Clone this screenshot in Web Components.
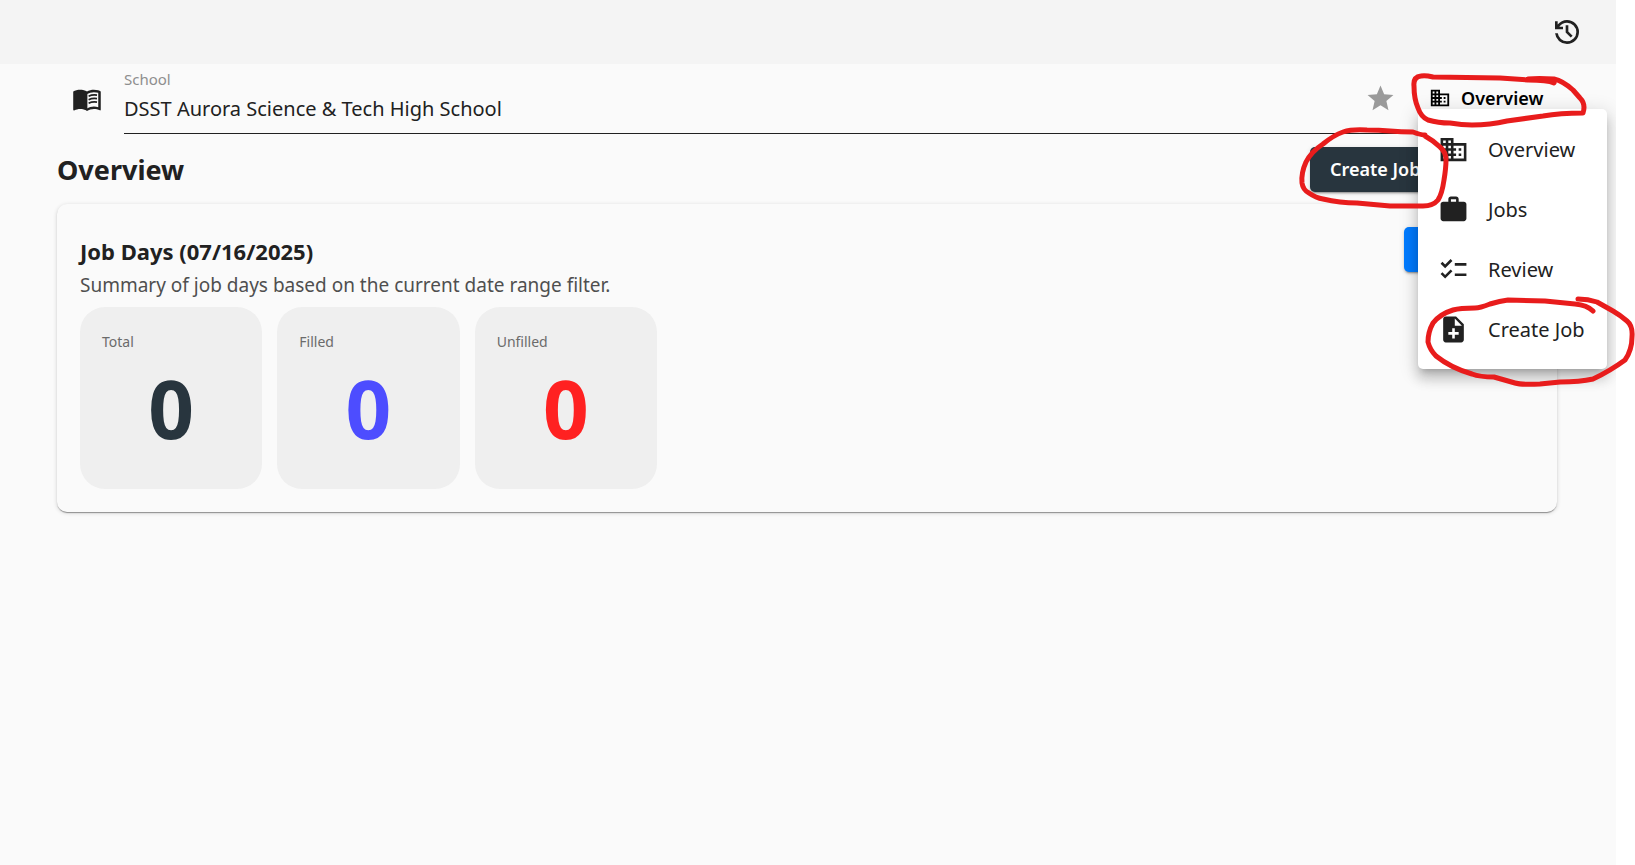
<!DOCTYPE html>
<html lang="en">
<head>
<meta charset="utf-8">
<title>Overview</title>
<style>
  html, body { margin: 0; background: #fff; }
  body { position: relative; overflow-x: hidden; font-family: "Noto Sans", "Open Sans", sans-serif; color: #212121; }
</style>
</head>
<body>
<app-shell>
  <app-toolbar slot="toolbar"></app-toolbar>
  <school-bar>
    <school-field label="School" value="DSST Aurora Science &amp; Tech High School"></school-field>
    <nav-menu label="Overview">
      <nav-item icon="domain">Overview</nav-item>
      <nav-item icon="work">Jobs</nav-item>
      <nav-item icon="checklist">Review</nav-item>
      <nav-item icon="note">Create Job</nav-item>
    </nav-menu>
  </school-bar>
  <page-heading heading="Overview">
    <app-button>Create Job</app-button>
  </page-heading>
  <summary-card heading="Job Days (07/16/2025)" text="Summary of job days based on the current date range filter.">
    <stat-tile label="Total" style="--tone:#28353e">0</stat-tile>
    <stat-tile label="Filled" style="--tone:#4d4dff">0</stat-tile>
    <stat-tile label="Unfilled" style="--tone:#ff2121">0</stat-tile>
  </summary-card>
</app-shell>
<ink-marks></ink-marks>

<script>
const ICONS = {
  book: '<path fill-rule="evenodd" d="M21 5c-1.110-.35-2.330-.5-3.500-.5-1.950 0-4.050.4-5.500 1.500-1.450-1.100-3.550-1.500-5.500-1.500S2.450 4.900 1 6v14.650c0 .25.25.5.5.5.1 0 .15-.05.25-.05C3.100 20.450 5.050 20 6.500 20c1.950 0 4.050.4 5.500 1.500 1.350-.85 3.800-1.500 5.500-1.500 1.650 0 3.350.3 4.750 1.050.1.05.15.05.25.05.25 0 .5-.25.5-.5V6c-.6-.45-1.250-.75-2-1zm0 13.500c-1.100-.35-2.300-.5-3.500-.5-1.700 0-4.150.65-5.500 1.500V8c1.350-.85 3.800-1.500 5.500-1.500 1.200 0 2.400.15 3.500.5v11.500z"/><path d="M1.500 6.300Q6.500 3.500 12.300 6.500V20.800Q7 18.500 1.500 20.500z"/><path d="M13.300 9.800q3-1.500 6.700-.9M13.300 12.600q3-1.500 6.700-.9M13.300 15.400q3-1.500 6.700-.9" fill="none" stroke="currentColor" stroke-width="1.300"/>',
  domain: '<path d="M12 7V3H2v18h20V7H12zM6 19H4v-2h2v2zm0-4H4v-2h2v2zm0-4H4V9h2v2zm0-4H4V5h2v2zm4 12H8v-2h2v2zm0-4H8v-2h2v2zm0-4H8V9h2v2zm0-4H8V5h2v2zm10 12h-8v-2h2v-2h-2v-2h2v-2h-2V9h8v10zm-2-8h-2v2h2v-2zm0 4h-2v2h2v-2z"/>',
  work: '<path d="M20 6h-4V4c0-1.110-.89-2-2-2h-4c-1.110 0-2 .89-2 2v2H4c-1.110 0-2 .89-2 2v11c0 1.110.89 2 2 2h16c1.110 0 2-.89 2-2V8c0-1.110-.89-2-2-2zm-6 0h-4V4h4v2z"/>',
  checklist: '<path d="M22 7h-9v2h9V7zm0 8h-9v2h9v-2zM5.540 11L2 7.460l1.410-1.410 2.120 2.120 4.240-4.240 1.410 1.410L5.540 11zm0 8L2 15.460l1.410-1.410 2.120 2.120 4.240-4.240 1.410 1.410L5.540 19z"/>',
  note: '<path d="M14 2H6c-1.100 0-2 .9-2 2v16c0 1.100.89 2 2 2h12c1.100 0 2-.9 2-2V8l-6-6zm2 14h-3v3h-2v-3H8v-2h3v-3h2v3h3v2zm-3-7V3.500L18.500 9H13z"/>',
  star: '<path d="M12 17.270L18.180 21l-1.640-7.030L22 9.240l-7.190-.61L12 2 9.190 8.630 2 9.240l5.460 4.730L5.820 21z"/>',
  history: '<path transform="translate(0 24) scale(.025)" d="M480-120q-138 0-240.5-91.5T122-440h82q14 104 92.5 172T480-200q117 0 198.5-81.5T760-480q0-117-81.5-198.5T480-760q-69 0-129 32t-101 88h110v80H120v-240h80v94q51-64 124.5-99T480-840q75 0 140.5 28.5t114 77q48.5 48.5 77 114T840-480q0 75-28.5 140.5t-77 114q-48.5 48.5-114 77T480-120Zm112-192L440-464v-216h80v184l128 128-56 56Z"/>'
};
const icon = (name, size) =>
  `<svg viewBox="0 0 24 24" width="${size}" height="${size}" fill="currentColor" aria-hidden="true">${ICONS[name]}</svg>`;

const define = (name, render) => customElements.define(name, class extends HTMLElement {
  connectedCallback() {
    if (this.shadowRoot) return;
    this.attachShadow({ mode: 'open' }).innerHTML =
      `<style>*{box-sizing:border-box} svg{display:block;flex:none} button,input{font:inherit;color:inherit;margin:0;border:0;background:none;padding:0}</style>` + render(this);
  }
});

define('app-shell', () => `
  <style>
    :host { display: block; margin-right: 19px; min-height: 100vh; background: #fafafa; overflow: hidden; }
    main { padding: 0 59px 24px 57px; }
  </style>
  <slot name="toolbar"></slot>
  <main><slot></slot></main>`);

define('app-toolbar', () => `
  <style>
    :host { display: flex; justify-content: flex-end; align-items: center; height: 64px; padding-right: 33px; background: #f4f4f4; }
  </style>
  <button type="button" aria-label="History">${icon('history', 32)}</button>`);

define('school-bar', () => `
  <style>
    :host { display: flex; align-items: center; }
    svg { margin: 0 22px 0 15px; }
    ::slotted(school-field) { flex: 1; }
  </style>
  ${icon('book', 30)}<slot></slot>`);

define('school-field', el => `
  <style>
    :host { display: flex; align-items: center; padding-right: 12px; border-bottom: 1px solid #212121; }
    .text { flex: 1; display: grid; gap: 7px; padding: 7px 0 9px; }
    label { font-size: 15px; line-height: 16px; color: #8e8e8e; }
    input { width: 100%; height: 30px; font-size: 20px; line-height: 30px; outline: 0; }
    button { color: #9a9a9a; }
  </style>
  <div class="text">
    <label for="f">${el.getAttribute('label')}</label>
    <input id="f" type="text" value="${el.getAttribute('value').replace('&', '&amp;')}">
  </div>
  <button type="button" aria-label="Favorite">${icon('star', 31)}</button>`);

define('nav-menu', el => `
  <style>
    :host { display: block; position: relative; width: 139px; margin-left: 10px; }
    .trigger { display: flex; align-items: center; gap: 10px; width: 100%; height: 44px; padding: 0 0 2px 11px; color: #000; font-size: 18px; font-weight: 600; }
    .menu { position: absolute; z-index: 2; top: 32px; left: 0; width: 189px; padding: 10px 0; background: #fff; border-radius: 5px;
      box-shadow: 0 6px 6px -4px rgba(0,0,0,.2), 0 10px 12px 1px rgba(0,0,0,.14), 0 4px 18px 3px rgba(0,0,0,.12); }
  </style>
  <button class="trigger" type="button" aria-haspopup="menu" aria-expanded="true">${icon('domain', 22)}<span>${el.getAttribute('label')}</span></button>
  <div class="menu" role="menu"><slot></slot></div>`);

define('nav-item', el => `
  <style>
    :host { display: block; }
    button { display: flex; align-items: center; gap: 19px; width: 100%; height: 60px; padding-left: 20px; font-size: 20px; white-space: nowrap; }
  </style>
  <button type="button" role="menuitem">${icon(el.getAttribute('icon'), 31)}<span><slot></slot></span></button>`);

define('page-heading', el => `
  <style>
    :host { display: flex; justify-content: space-between; padding: 13px 0 12px; }
    h1 { margin: 0; font-size: 27px; line-height: 45px; font-weight: 700; }
    .actions { display: flex; width: 247px; }
  </style>
  <h1>${el.getAttribute('heading')}</h1>
  <div class="actions"><slot></slot></div>`);

define('app-button', () => `
  <style>
    :host { display: block; }
    button { height: 45px; padding: 0 20px 2px; border-radius: 5px; background: #28353e; color: #fff; font-size: 18px; font-weight: 600; white-space: nowrap;
      box-shadow: 0 3px 1px -2px rgba(0,0,0,.2), 0 2px 2px rgba(0,0,0,.14), 0 1px 5px rgba(0,0,0,.12); }
  </style>
  <button type="button"><slot></slot></button>`);

define('summary-card', el => `
  <style>
    :host { display: block; padding: 23px; border-radius: 10px; background: #fafafa;
      box-shadow: 0 2px 1px -1px rgba(0,0,0,.24), 0 1px 1px rgba(0,0,0,.16), 0 1px 4px rgba(0,0,0,.16); }
    header { display: flex; justify-content: space-between; align-items: flex-start; }
    .titles { display: grid; gap: 2px; padding: 8px 0 6px; }
    h2, p { margin: 0; line-height: 32px; }
    h2 { font-size: 22px; font-weight: 700; }
    p { font-size: 19px; color: #4f4f4f; }
    button { width: 130px; height: 45px; border-radius: 5px; background: #007bff;
      box-shadow: 0 3px 1px -2px rgba(0,0,0,.2), 0 2px 2px rgba(0,0,0,.14), 0 1px 5px rgba(0,0,0,.12); }
    .tiles { display: grid; grid-template-columns: repeat(3, 1fr); gap: 15px; max-width: 577px; }
  </style>
  <header>
    <div class="titles"><h2>${el.getAttribute('heading')}</h2><p>${el.getAttribute('text')}</p></div>
    <button type="button" aria-label="Filter"></button>
  </header>
  <div class="tiles"><slot></slot></div>`);

define('stat-tile', el => `
  <style>
    :host { display: block; min-height: 182px; padding: 25px 22px 24px; border-radius: 25px; background: #efefef; box-sizing: border-box; }
    .label { font-size: 14px; line-height: 20px; color: #6b6b6b; }
    .value { margin-top: 16px; font-size: 80px; line-height: 80px; font-weight: 700; text-align: center; color: var(--tone); }
  </style>
  <div class="label">${el.getAttribute('label')}</div>
  <div class="value"><slot></slot></div>`);

/* Hand-drawn highlights, floating over the right edge of the page. */
define('ink-marks', () => `
  <style>
    :host { position: absolute; z-index: 5; top: 0; right: 0; pointer-events: none; }
  </style>
  <svg width="345" height="400" viewBox="1290 0 345 400" fill="none" stroke="#e81c1c" stroke-width="5" stroke-linecap="round" stroke-linejoin="round" aria-hidden="true">
    <path d="M1554 83C1548 80 1538 80 1528 80L1500 78L1433 77Q1425 75 1421 76Q1413 77 1414 86Q1414 99 1418 108Q1421 117 1428 120Q1438 123 1450 123Q1462 125 1472 125Q1490 125 1507 121L1543 116Q1560 113 1583 113Q1586 104 1580 98L1573 90Q1563 81 1554 79Q1538 78 1528 79"/>
    <path d="M1425 135Q1421 135 1413 132Q1401 132 1390 131Q1379 130 1367 130Q1352 129 1343 132Q1334 135 1323 144Q1311 152 1306 162Q1301 173 1302 183Q1303 190 1309 193Q1316 198 1323 199Q1340 203 1357 203L1390 206H1423Q1433 206 1438 200Q1442 194 1444 180Q1446 168 1446 160Q1446 152 1440 147Q1434 141 1425 136"/>
    <path d="M1593 311Q1587 305 1575 304L1545 301L1508 300Q1500 301 1490 304Q1480 308 1475 308Q1460 308 1453 310Q1440 314 1433 323Q1428 332 1428 342Q1430 350 1436 356Q1451 368 1472 374Q1480 377 1494 377L1515 383Q1522 385 1540 384L1560 382Q1580 382 1593 379Q1610 371 1625 360Q1632 350 1632 337Q1633 326 1627 321Q1620 315 1613 311L1597 302Q1588 299 1578 299"/>
  </svg>`);
</script>
</body>
</html>
